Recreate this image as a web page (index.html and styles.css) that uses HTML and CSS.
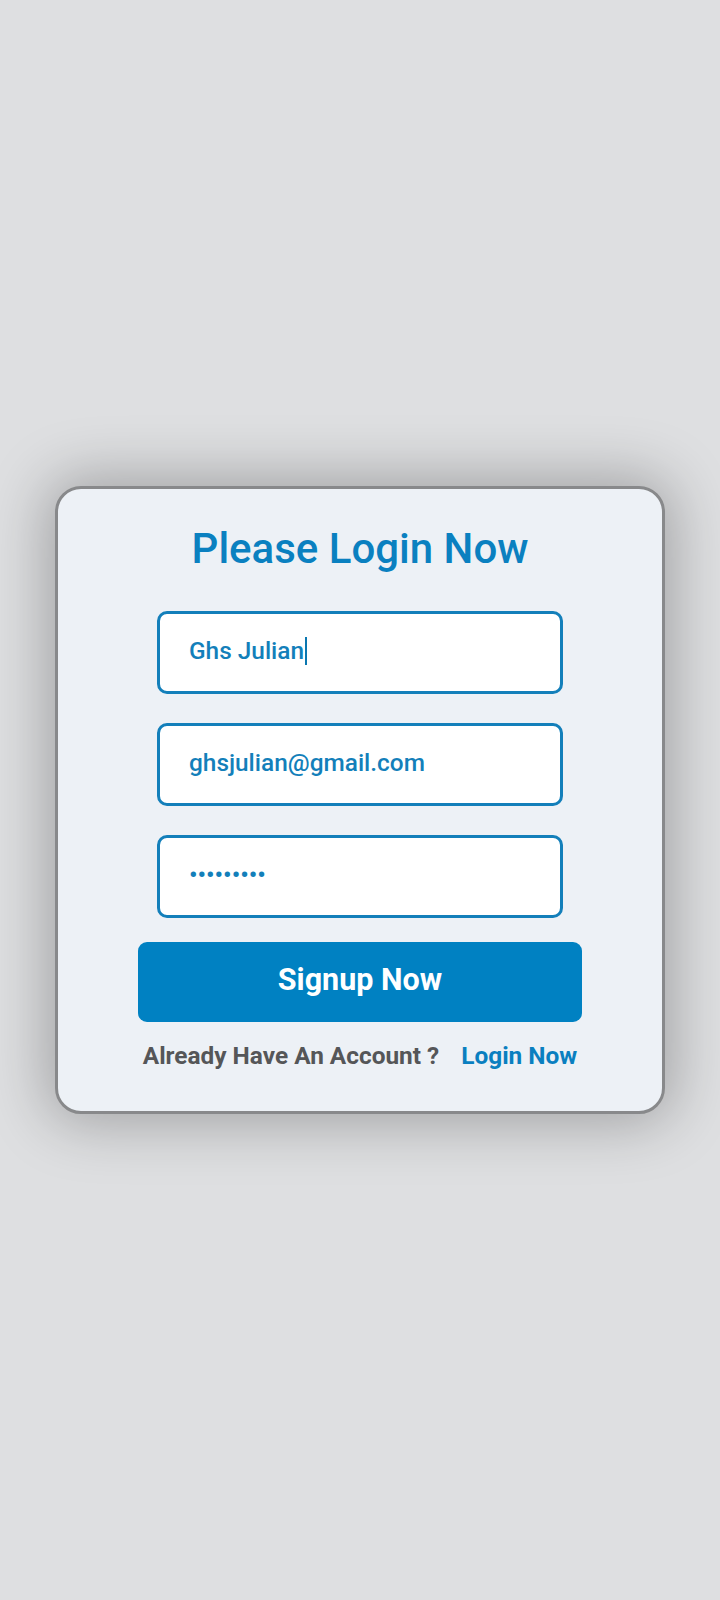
FILE: index.html
```html
<!DOCTYPE html>
<html lang="en">
<head>
<meta charset="utf-8">
<title>Signup</title>
<link rel="stylesheet" href="styles.css">
</head>
<body>
<main class="page">
  <form class="card">
    <h1 class="title">Please Login Now</h1>
    <div class="field"><span class="value">Ghs Julian</span><span class="caret"></span></div>
    <div class="field"><span class="value">ghsjulian@gmail.com</span></div>
    <div class="field"><span class="value dots">•••••••••</span></div>
    <button type="button" class="btn">Signup Now</button>
    <p class="footer"><span class="muted">Already Have An Account ?</span><a class="link" href="#">Login Now</a></p>
  </form>
</main>
</body>
</html>
```
FILE: styles.css
```css
* { box-sizing: border-box; }
html, body { margin: 0; padding: 0; }
body {
  background: #dedfe1;
  font-family: Roboto, "Liberation Sans", sans-serif;
}
.page {
  height: 1600px;
  display: flex;
  align-items: center;
  justify-content: center;
}
.card {
  width: 610px;
  height: 628px;
  background: #edf1f6;
  border: 3px solid #88898b;
  border-radius: 26px;
  box-shadow: 0 0 60px 8px rgba(0, 0, 0, 0.28);
  padding: 34px 0 0;
  display: flex;
  flex-direction: column;
  align-items: center;
}
.title {
  margin: 0 0 36px;
  font-size: 42px;
  line-height: 52px;
  font-weight: 500;
  color: #0a80c0;
}
.field {
  width: 406px;
  height: 83px;
  background: #fff;
  border: 3px solid #137fba;
  border-radius: 10px;
  padding: 0 29px;
  display: flex;
  align-items: center;
  margin-bottom: 29px;
  color: #137fba;
  font-size: 24.4px;
  font-weight: 500;
}
.field:nth-of-type(3) { margin-bottom: 24px; }
.value { line-height: 28px; margin-top: -3px; }
.caret {
  width: 2px;
  height: 28px;
  background: #0a77b0;
  margin-left: 1px;
  margin-top: -3px;
}
.btn {
  width: 444px;
  height: 80px;
  border: 0;
  border-radius: 9px;
  background: #0081c2;
  color: #fff;
  font-family: inherit;
  font-size: 30.5px;
  line-height: 36px;
  font-weight: 700;
  margin: 0 0 20px;
  padding: 0 0 5px;
}
.footer {
  margin: 0;
  font-size: 24.4px;
  line-height: 28px;
  font-weight: 700;
  display: flex;
  gap: 22px;
}
.muted { color: #555658; }
.link { color: #0a7fc0; text-decoration: none; }
```
